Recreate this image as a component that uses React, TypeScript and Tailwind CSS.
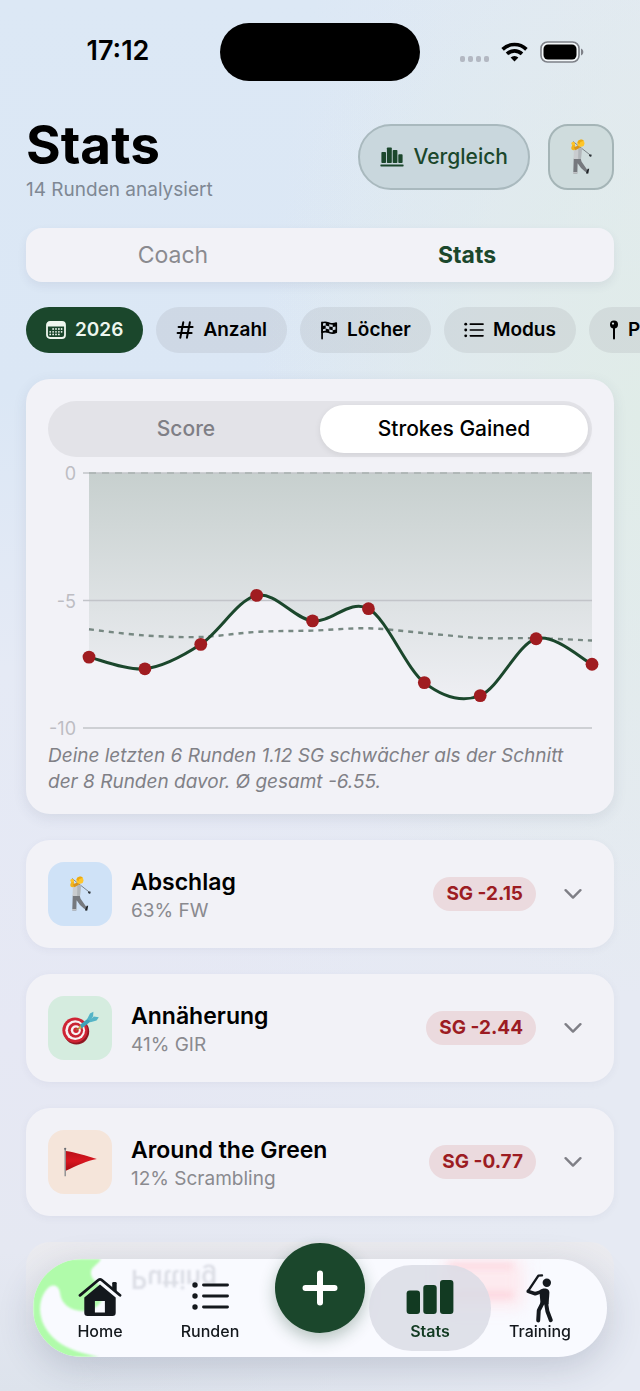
import { clsx } from "clsx";
import { useState } from "react";
import type { ReactNode } from "react";

/* ---------- Icons ---------- */

const WifiIcon = () => (
  <svg viewBox="0 0 27 20" className="h-5 w-[27px]" fill="none" stroke="#000" strokeWidth="3.6">
    <path d="M1.6 7.4a17 17 0 0 1 23.8 0" />
    <path d="M6 11.9a10.7 10.7 0 0 1 15 0" />
    <path d="M13.5 19.6l-3.9-4.1a5.6 5.6 0 0 1 7.8 0z" fill="#000" stroke="none" />
  </svg>
);

const BatteryIcon = () => (
  <svg viewBox="0 0 44 22" className="h-[22px] w-11">
    <rect x="1" y="1" width="38" height="20" rx="6.5" fill="#fff" fillOpacity="0.6" stroke="#7e8188" strokeWidth="1.6" />
    <rect x="3.5" y="3.5" width="33" height="15" rx="4.5" fill="#000" />
    <path d="M41 7.5c1.8.7 2.3 2 2.3 3.5s-.5 2.8-2.3 3.5z" fill="#7e8188" />
  </svg>
);

const CompareIcon = () => (
  <svg viewBox="0 0 24 20" className="h-5 w-6" fill="currentColor">
    <rect x="1.4" y="5" width="4.6" height="11" rx="0.8" />
    <rect x="6.9" y="0.4" width="4.9" height="15.6" rx="0.8" />
    <rect x="12.7" y="3" width="4.7" height="13" rx="0.8" />
    <rect x="18.3" y="7.2" width="4.3" height="8.8" rx="0.8" />
    <rect x="0.4" y="17.4" width="23.2" height="2" rx="0.6" />
  </svg>
);

const CalendarIcon = () => (
  <svg viewBox="0 0 20 18" className="h-[18px] w-5">
    <rect x="1" y="1" width="18" height="16" rx="3" fill="none" stroke="currentColor" strokeWidth="1.8" />
    <path d="M1 3.6A2.6 2.6 0 0 1 3.6 1h12.8A2.6 2.6 0 0 1 19 3.6v1.9H1z" fill="currentColor" />
    <g fill="currentColor">
      {[8, 10.8, 13.4].map((y) =>
        [4.2, 7.1, 10, 12.9, 15.6].map((x) =>
          (y === 8 && x < 5) || (y > 13 && x > 15) ? null : (
            <circle key={`${x}-${y}`} cx={x} cy={y} r="0.9" />
          )
        )
      )}
    </g>
  </svg>
);

const HashIcon = () => (
  <svg viewBox="0 0 18 18" className="size-[18px]" fill="none" stroke="currentColor" strokeWidth="2" strokeLinecap="round">
    <path d="M7.3 1.2L4.3 16.8M13.9 1.2l-3 15.6M2.6 5.9h14M1.6 12h14" />
  </svg>
);

const FlagCheckeredIcon = () => (
  <svg viewBox="0 0 19 20" className="h-5 w-[18px]">
    <path d="M2.2 2v17" stroke="currentColor" strokeWidth="1.8" strokeLinecap="round" />
    <path d="M2.2 2.6c3-1.6 5.2-.6 7.4.2 2.4.9 4.6 1.2 7.6-.2v9.8c-3 1.4-5.2 1.1-7.6.2-2.2-.8-4.4-1.8-7.4-.2z" fill="none" stroke="currentColor" strokeWidth="1.7" strokeLinejoin="round" />
    <path d="M6 2l3.8.9v3.3L6 5.2zM13.4 3.8l3.6-.9v3.3l-3.6.7zM2.4 5.9L6 5.2v3.3l-3.6.9zM9.8 6.2l3.6.7v3.4l-3.6-.9zM6 8.5l3.8.9v3.3L6 11.7zM13.4 10.3l3.6-.8v3.3l-3.6.6z" fill="currentColor" />
  </svg>
);

const ListIcon = ({ className }: { className: string }) => (
  <svg viewBox="0 0 37 30" className={className} fill="currentColor">
    <circle cx="3" cy="4" r="2.7" />
    <circle cx="3" cy="15" r="2.7" />
    <circle cx="3" cy="26" r="2.7" />
    <path d="M11.5 4h24M11.5 15h24M11.5 26h24" stroke="currentColor" strokeWidth="2.9" strokeLinecap="round" />
  </svg>
);

const PinIcon = () => (
  <svg viewBox="0 0 10 20" className="h-5 w-2.5">
    <circle cx="5" cy="4.6" r="4" fill="currentColor" />
    <circle cx="4" cy="3.6" r="1.1" fill="#d9e2e3" />
    <path d="M5 8v10.4" stroke="currentColor" strokeWidth="2" strokeLinecap="round" />
  </svg>
);

const ChevronIcon = () => (
  <svg viewBox="0 0 18 12" className="h-3 w-[18px]" fill="none" stroke="#7f7f86" strokeWidth="2.4" strokeLinecap="round" strokeLinejoin="round">
    <path d="M1.6 2.2L9 9.6l7.4-7.4" />
  </svg>
);

const GolferEmoji = () => (
  <svg viewBox="0 0 26 38" className="h-9 w-[25px]">
    <path d="M4 2.6L21.8 16.6" stroke="#6d7479" strokeWidth="0.9" />
    <path d="M21.3 16l2.6.6-.8 2.4-2.2-1z" fill="#2d3338" />
    <path d="M4.8 20.5h7.4l.8 3.2 3.8 5.6 2.6 3.8-2.2 1.8-4.7-4.2-3.6-5.2-.3 10.8H4.3z" fill="#76797e" />
    <path d="M4.3 35h4.4v1.2H3.8z" fill="#d9dadc" />
    <path d="M19.6 31.4l1.5 0-.9 5-2 .3-.4-1.8z" fill="#202428" />
    <path d="M5 11l4.5-2.2 4 1.6-1 10.6H4.6z" fill="#c9cccf" />
    <path d="M9.6 8.8l3.9 1.6-1 10.6h-3z" fill="#b1b6ba" />
    <path d="M4.2 4.4l-1.9 4.4c-.4 2 .6 3.2 2.6 3.2l5.4-2.8-3.6-.4-1-4z" fill="#f3b51d" />
    <circle cx="4.2" cy="4.7" r="1.9" fill="#ffc529" />
    <path d="M5 9l6-2.8 1 2.6-5.4 3z" fill="#d8941b" />
    <circle cx="12.4" cy="4.4" r="3.7" fill="#ffc629" />
    <path d="M8.7 4a4 4 0 0 1 6.8-2.2c-2 .8-4 .6-4.6 3.8z" fill="#eca912" />
  </svg>
);

const TargetEmoji = () => (
  <svg viewBox="0 0 40 36" className="h-9 w-10">
    <circle cx="16.4" cy="21.6" r="12.8" fill="#8f1722" />
    <circle cx="15" cy="20.2" r="12.6" fill="#cf2434" />
    <circle cx="15.2" cy="20.2" r="9.9" fill="#f7f2f3" />
    <circle cx="15.5" cy="20.2" r="7.6" fill="#c92333" />
    <circle cx="15.8" cy="20.2" r="5" fill="#f7f2f3" />
    <circle cx="16" cy="20.2" r="2.7" fill="#cf2434" />
    <path d="M16 20.2l6.4-4.6" stroke="#9a7a34" strokeWidth="1.4" />
    <path d="M20 14.8l8-6.2 3.6 2.2-10 7.8z" fill="#3ea2b8" />
    <path d="M27 9.4l3-6 3.4-1.6-.3 4.4-3 4.6zM29.4 10.8l4.4-4.2 5 .6-2.2 3.4-6.2 1.6z" fill="#55b4c6" />
    <path d="M20 14.8l1.6 3.8-3 .6z" fill="#d9b24a" />
  </svg>
);

const FlagEmoji = () => (
  <svg viewBox="0 0 36 30" className="h-[30px] w-9">
    <defs>
      <linearGradient id="flagRed" x1="0" x2="0" y1="0" y2="1">
        <stop offset="0" stopColor="#b81018" />
        <stop offset="0.5" stopColor="#d8161f" />
        <stop offset="1" stopColor="#a80c14" />
      </linearGradient>
    </defs>
    <path d="M3.2 1.2v28" stroke="#8b8d90" strokeWidth="1.4" />
    <circle cx="3.2" cy="1.8" r="1.1" fill="#6d6f73" />
    <path d="M3.9 4c9 1.2 20 4.6 31 8-10 1.6-19 6.2-31 11.8z" fill="url(#flagRed)" />
  </svg>
);

const HomeIcon = () => (
  <svg viewBox="0 0 44 40" className="h-10 w-11">
    <path d="M34.2 11V6.2a1.3 1.3 0 0 1 1.3-1.3h1.9a1.3 1.3 0 0 1 1.3 1.3v9.6z" fill="currentColor" />
    <path d="M2 18.3L20.4 3a2.6 2.6 0 0 1 3.3 0L42 18.3" fill="none" stroke="currentColor" strokeWidth="2.8" strokeLinecap="round" />
    <path fillRule="evenodd" d="M22 7.6L37.7 20.6V35.8a3.2 3.2 0 0 1-3.2 3.2h-25a3.2 3.2 0 0 1-3.2-3.2V20.6zM16.9 24v11.6h10V24z" fill="currentColor" />
  </svg>
);

const BarsIcon = () => (
  <svg viewBox="0 0 48 36" className="h-9 w-12" fill="currentColor">
    <rect x="0.6" y="11.6" width="13.4" height="23.4" rx="3" />
    <rect x="17.3" y="6" width="13.4" height="29" rx="3" />
    <rect x="34" y="1" width="13.4" height="34" rx="3" />
  </svg>
);

const GolfSwingIcon = () => (
  <svg viewBox="0 0 30 50" className="h-[50px] w-[30px]" fill="none" stroke="currentColor" strokeLinecap="round" strokeLinejoin="round">
    <path d="M3.2 17.8L13.4 2.6l3.6-.2" strokeWidth="2.4" />
    <circle cx="21.8" cy="9.8" r="4.2" fill="currentColor" stroke="none" />
    <path d="M3.2 18.4l7 2.4 7-2.4" strokeWidth="3.6" />
    <path d="M14.6 17.2c3.4-2.6 9.8-2.4 9.8 2.6l-.8 11.4-8 .4-.8-9z" fill="currentColor" stroke="none" />
    <path d="M17.6 30l-3.8 7.4-.6 10" strokeWidth="4" />
    <path d="M21 29.6l1.4 8.6 3.4 9" strokeWidth="4" />
  </svg>
);

/* ---------- Chart ---------- */

const VALUES = [-7.22, -7.68, -6.72, -4.8, -5.8, -5.32, -8.22, -8.73, -6.5, -7.5];
const AVERAGE = [-6.13, -6.37, -6.43, -6.23, -6.18, -6.09, -6.28, -6.47, -6.48, -6.57];
const TICKS = [0, -5, -10];

const LEFT = 41;
const RIGHT = 544;
const toX = (i: number) => LEFT + (i * (RIGHT - LEFT)) / (VALUES.length - 1);
const toY = (v: number) => 16 - v * 25.5;

// Catmull-Rom through all points, written as cubic segments
const smoothPath = (values: number[]) => {
  const pts = values.map((v, i) => [toX(i), toY(v)]);
  return pts.slice(1).reduce((d, p2, i) => {
    const p0 = pts[i - 1] ?? pts[i];
    const p1 = pts[i];
    const p3 = pts[i + 2] ?? p2;
    const c1 = [p1[0] + (p2[0] - p0[0]) / 6, p1[1] + (p2[1] - p0[1]) / 6];
    const c2 = [p2[0] - (p3[0] - p1[0]) / 6, p2[1] - (p3[1] - p1[1]) / 6];
    return `${d}C${c1.join(" ")} ${c2.join(" ")} ${p2.join(" ")}`;
  }, `M${pts[0].join(" ")}`);
};

const StrokesChart = () => {
  const line = smoothPath(VALUES);
  return (
    <svg viewBox="0 0 544 286" className="block w-full overflow-visible" role="img" aria-label="Strokes Gained">
      <defs>
        <linearGradient id="area" gradientUnits="userSpaceOnUse" x1="0" x2="0" y1="16" y2="240">
          <stop offset="0" stopColor="#1b472c" stopOpacity="0.2" />
          <stop offset="1" stopColor="#1b472c" stopOpacity="0.02" />
        </linearGradient>
      </defs>
      <path d={`${line}L${RIGHT} 16L${LEFT} 16Z`} fill="url(#area)" />
      {TICKS.map((tick) => (
        <g key={tick}>
          <line x1="35" x2={RIGHT} y1={toY(tick)} y2={toY(tick)} stroke="#c2c4c9" strokeWidth="1.4" />
          <text x="28" y={toY(tick) + 7} textAnchor="end" fontSize="18" fill="#bdbdc3">
            {tick}
          </text>
        </g>
      ))}
      <line x1={LEFT} x2={RIGHT} y1="16" y2="16" stroke="#a9b1b0" strokeWidth="1.6" strokeDasharray="7 6" />
      <path d={smoothPath(AVERAGE)} fill="none" stroke="#778882" strokeWidth="2.4" strokeDasharray="5 5" />
      <path d={line} fill="none" stroke="#1b472c" strokeWidth="3" />
      {VALUES.map((v, i) => (
        <circle key={i} cx={toX(i)} cy={toY(v)} r="6.4" fill="#a01c20" />
      ))}
    </svg>
  );
};

/* ---------- Page parts ---------- */

const StatusBar = () => (
  <div className="grid h-[103px] grid-cols-[1fr_200px_1fr] items-center">
    <div className="pr-4 pl-8 text-center text-[27px] font-semibold">17:12</div>
    <div className="h-[58px] rounded-full bg-black" />
    <div className="flex items-center justify-end pr-14">
      <div className="mt-3.5 mr-3 flex gap-[3px]">
        {[0, 1, 2, 3].map((dot) => (
          <span key={dot} className="h-1.5 w-[5px] rounded-[2px] bg-[#b3b8c2]" />
        ))}
      </div>
      <WifiIcon />
      <div className="ml-3">
        <BatteryIcon />
      </div>
    </div>
  </div>
);

const FILTERS: { label: string; icon: ReactNode }[] = [
  { label: "2026", icon: <CalendarIcon /> },
  { label: "Anzahl", icon: <HashIcon /> },
  { label: "Löcher", icon: <FlagCheckeredIcon /> },
  { label: "Modus", icon: <ListIcon className="h-4 w-5" /> },
  { label: "Platz", icon: <PinIcon /> },
];

const CATEGORIES = [
  { title: "Abschlag", detail: "63% FW", sg: "SG -2.15", tint: "bg-[#cfe2f7]", icon: <GolferEmoji /> },
  { title: "Annäherung", detail: "41% GIR", sg: "SG -2.44", tint: "bg-[#d5ecdf]", icon: <TargetEmoji /> },
  { title: "Around the Green", detail: "12% Scrambling", sg: "SG -0.77", tint: "bg-[#f5e5da]", icon: <FlagEmoji /> },
];

interface CategoryCardProps {
  title: string;
  detail: string;
  sg: string;
  tint: string;
  icon: ReactNode;
}
const CategoryCard = ({ title, detail, sg, tint, icon }: CategoryCardProps) => (
  <button
    type="button"
    className="flex h-27 w-full items-center rounded-3xl bg-[#f2f2f7] pr-8 pl-[22px] text-left shadow-[0_2px_8px_rgba(60,60,100,0.05)]"
  >
    <span className={clsx("flex size-16 items-center justify-center rounded-2xl", tint)}>{icon}</span>
    <span className="ml-[19px] flex flex-1 flex-col pt-1">
      <span className="text-[23px] leading-[30px] font-semibold text-black">{title}</span>
      <span className="text-[19px] leading-7 text-[#8a8a8f]">{detail}</span>
    </span>
    <span className="mr-7 rounded-full bg-[#ebdade] px-[13px] py-[5px] text-[19px] leading-6 font-bold text-[#9c1c22]">
      {sg}
    </span>
    <ChevronIcon />
  </button>
);

const TabBar = () => (
  <nav className="fixed inset-x-[33px] bottom-[34px] h-[98px] rounded-full bg-[#f9faff] shadow-[0_10px_36px_rgba(50,60,90,0.2)]">
    <div className="absolute inset-0 overflow-hidden rounded-full" aria-hidden="true">
      <svg viewBox="0 0 130 98" className="h-full w-[130px]">
        <path
          d="M0 0h68c-3 6-11 8-10 15 1 8 11 10 12 18 1 12-10 20-22 19-12-1-20-8-21-18-1-8-8-10-13-4C4 42 5 60 16 74c10 13 26 19 50 24H0z"
          fill="#b0fbaa"
          className="blur-[1px]"
        />
      </svg>
      <span className="absolute top-0 left-[98px] -scale-y-100 text-[25px] font-semibold text-[#dcdee6] blur-[1px]">
        Putting
      </span>
      <div className="absolute top-0 left-[410px] h-12 w-20 bg-[#ffe3e8] opacity-70 blur-[8px]" />
      <div className="absolute top-1 left-[416px] h-1.5 w-16 bg-[#ffbfc9] opacity-40 blur-[3px]" />
      <div className="absolute top-8 left-[416px] h-2 w-16 bg-[#ffbfc9] opacity-40 blur-[3px]" />
    </div>
    <div className="relative grid h-full grid-cols-5 px-3 text-base font-medium text-[#14181d]">
      <a href="#home" className="flex flex-col items-center justify-end pb-[14px]">
        <HomeIcon />
        <span className="mt-0.5 leading-6">Home</span>
      </a>
      <a href="#runden" className="flex flex-col items-center justify-end pb-[14px]">
        <ListIcon className="h-[30px] w-[37px]" />
        <span className="mt-2 leading-6">Runden</span>
      </a>
      <div className="flex justify-center">
        <button
          type="button"
          aria-label="Neue Runde"
          className="-mt-4 flex size-[90px] shrink-0 items-center justify-center rounded-full bg-[#1b472c] shadow-[0_6px_16px_rgba(27,71,44,0.3)]"
        >
          <svg viewBox="0 0 36 36" className="size-9" stroke="#fff" strokeWidth="6" strokeLinecap="round">
            <path d="M18 3.5v29M3.5 18h29" />
          </svg>
        </button>
      </div>
      <a
        href="#stats"
        aria-current="page"
        className="-mx-1.5 my-1.5 flex flex-col items-center justify-end rounded-full bg-[#dadce5]/85 pb-2 font-semibold text-[#123a22]"
      >
        <BarsIcon />
        <span className="mt-1 leading-6">Stats</span>
      </a>
      <a href="#training" className="flex flex-col items-center justify-end pb-[14px]">
        <GolfSwingIcon />
        <span className="-mt-1 leading-6">Training</span>
      </a>
    </div>
  </nav>
);

const App = () => {
  const [view, setView] = useState("Stats");
  const [metric, setMetric] = useState("Strokes Gained");

  return (
    <div className="min-h-screen overflow-hidden bg-[radial-gradient(ellipse_at_100%_30%,#e0ece8_0%,rgba(224,236,232,0)_42%),linear-gradient(100deg,rgba(230,234,243,0)_35%,#e6eaf3_90%),linear-gradient(180deg,#dce8f5_0%,#dbe7f5_28%,#e5eaf5_48%,#e6e8f4_75%,#e5e8f2_90%,#dde3ec_100%)] pb-10 font-['Inter','Liberation_Sans',sans-serif] text-black">
      <StatusBar />

      <main className="px-[26px]">
        <header className="flex items-start justify-between pt-[11px]">
          <div>
            <h1 className="text-[53px] leading-[62px] font-bold">Stats</h1>
            <p className="text-[19px] leading-7 text-[#7f8894]">14 Runden analysiert</p>
          </div>
          <div className="mt-2.5 flex gap-[18px]">
            <button
              type="button"
              className="flex h-[66px] items-center gap-2.5 rounded-full border-2 border-[#a9b9be] bg-[#c9d7dd] px-5 text-[21px] font-medium text-[#1b472c]"
            >
              <CompareIcon />
              Vergleich
            </button>
            <button
              type="button"
              aria-label="Profil"
              className="flex size-[66px] items-center justify-center rounded-[20px] border-2 border-[#a5b5b7] bg-[#cfdcdd]"
            >
              <GolferEmoji />
            </button>
          </div>
        </header>

        <div role="tablist" className="mt-6 grid h-[54px] grid-cols-2 rounded-2xl bg-[#f2f2f7] shadow-[0_4px_10px_rgba(60,70,100,0.08)]">
          {["Coach", "Stats"].map((tab) => (
            <button
              key={tab}
              type="button"
              role="tab"
              aria-selected={view === tab}
              onClick={() => setView(tab)}
              className={clsx("text-[23px]", view === tab ? "font-bold text-[#1b472c]" : "text-[#8a8a8f]")}
            >
              {tab}
            </button>
          ))}
        </div>

        <div className="mt-[25px] -mr-[26px] flex gap-[13px] overflow-hidden">
          {FILTERS.map(({ label, icon }, index) => (
            <button
              key={label}
              type="button"
              className={clsx(
                "flex h-[46px] shrink-0 items-center gap-[9px] rounded-full px-5 text-[19px] font-semibold",
                index === 0 ? "bg-[#1b472c] text-[#eef6ee]" : "bg-[#808088]/14 text-black"
              )}
            >
              {icon}
              {label}
            </button>
          ))}
        </div>

        <section className="mt-[26px] rounded-3xl bg-[#f2f2f7] px-[22px] pt-[22px] pb-[19px] shadow-[0_4px_14px_rgba(60,70,100,0.1)]">
          <div role="tablist" className="grid h-14 grid-cols-2 rounded-full bg-[#e3e3e8] p-1">
            {["Score", "Strokes Gained"].map((tab) => (
              <button
                key={tab}
                type="button"
                role="tab"
                aria-selected={metric === tab}
                onClick={() => setMetric(tab)}
                className={clsx(
                  "rounded-full text-[21px] font-medium",
                  metric === tab ? "bg-white text-black shadow-[0_2px_6px_rgba(0,0,0,0.08)]" : "text-[#7f7f86]"
                )}
              >
                {tab}
              </button>
            ))}
          </div>
          <StrokesChart />
          <p className="text-[19px] leading-[26px] text-[#808086] italic">
            Deine letzten 6 Runden 1.12 SG schwächer als der Schnitt der 8 Runden davor. Ø gesamt -6.55.
          </p>
        </section>

        <div className="mt-[26px] flex flex-col gap-[26px]">
          {CATEGORIES.map((category) => (
            <CategoryCard key={category.title} {...category} />
          ))}
          <div className="h-27 rounded-3xl bg-linear-to-b from-[#ebebef] to-[#e1e4ec]/0" />
        </div>
      </main>

      <TabBar />
    </div>
  );
};

export default App;
